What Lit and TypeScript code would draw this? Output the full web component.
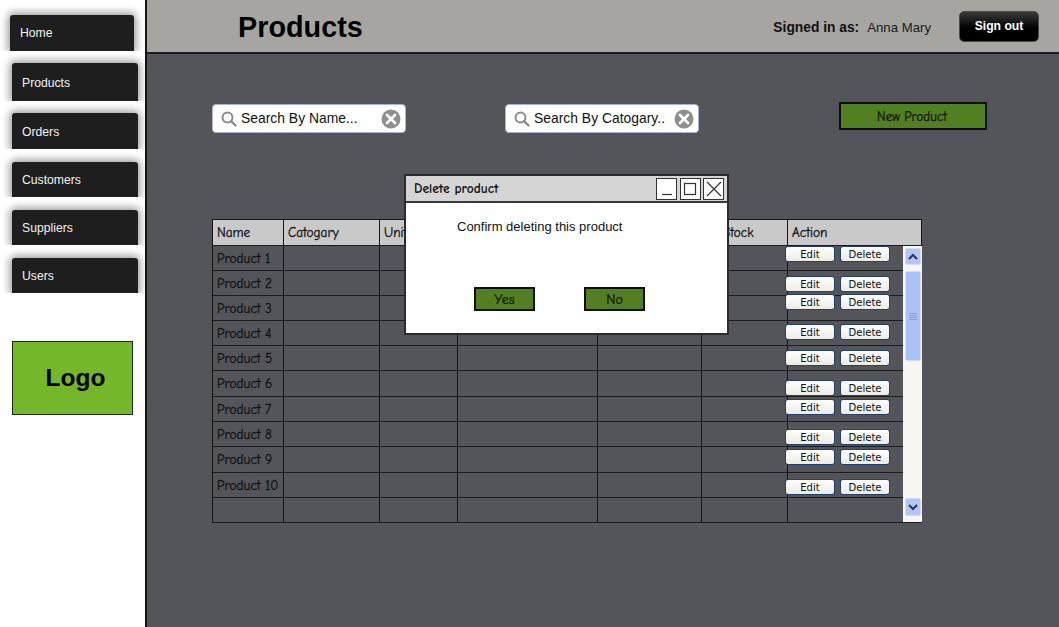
import { LitElement, html, css, svg } from "lit";
import { customElement } from "lit/decorators.js";
import { styleMap } from "lit/directives/style-map.js";

const NAV = [
  { label: "Home", pad: "10px 11px 0 10px", h: 36, mt: 5, pt: 0 },
  { label: "Products", pad: "10px 7px 0 12px", h: 38, mt: 2, pt: 2 },
  { label: "Orders", pad: "10px 7px 0 12px", h: 36, mt: 2, pt: 2 },
  { label: "Customers", pad: "10px 7px 0 12px", h: 35, mt: 3, pt: 0 },
  { label: "Suppliers", pad: "10px 7px 0 12px", h: 35, mt: 3, pt: 0 },
  { label: "Users", pad: "10px 7px 0 12px", h: 35, mt: 3, pt: 0 },
];
const COLS = [71, 96, 78, 140, 104, 86, 134];
const ROW_H = [25, 25, 25, 25, 25, 26, 25, 25, 26, 25, 25];
const BTN_TOP = [27, 57, 75, 105, 131, 161, 180, 210, 230, 260];
const HEAD = ["Name", "Catogary", "Unit", "", "", "In Stock", "Action"];

@customElement("app-root")
export class AppRoot extends LitElement {
  static styles = css`
    :host { display: block; width: 1059px; height: 627px; overflow: hidden; font-family: "Liberation Sans", Arial, sans-serif; background: #fff; }
    * { box-sizing: border-box; }
    .page { display: flex; width: 1059px; height: 627px; position: relative; }
    .side { width: 145px; flex: none; background: #fff; display: flex; flex-direction: column; }
    .navwrap { overflow: hidden; flex: none; }
    .nav { background: #1e1e1e; color: #f2f2f2; font-size: 12.2px; display: flex; align-items: center; padding-left: 10px; border-radius: 3px 3px 0 0; box-shadow: 0 0 9px 2px rgba(0,0,0,.42); }
    .logo { margin: 48px 0 0 12px; width: 121px; height: 74px; background: #74b72b; border: 1px solid #1c2a10; display: flex; align-items: center; justify-content: center; font-weight: 700; font-size: 24.5px; color: #000; padding: 0 0 1px 6px; }
    .main { flex: 1; display: flex; flex-direction: column; border-left: 2px solid #141414; }
    .top { height: 54px; flex: none; background: #a6a5a1; border-bottom: 2px solid #1d1d1d; display: flex; align-items: center; padding-left: 91px; padding-right: 20px; }
    h1 { margin: 2px 0 0; font-size: 28.8px; font-weight: 700; color: #000; flex: 1; line-height: 1; }
    .signed { font-size: 13.8px; font-weight: 700; color: #111; margin: 2px 8px 0 0; }
    .user { font-size: 13.2px; color: #1a1a1a; margin: 2px 28px 0 0; }
    .signout { width: 80px; height: 31px; border-radius: 5px; background: linear-gradient(#3a3a3a, #000 55%); border: 1px solid #4a4a4a; color: #fff; font: 700 12.2px "Liberation Sans", Arial, sans-serif; padding: 0; }
    .content { flex: 1; background: #54555a; padding: 50px 0 0 65px; position: relative; }
    .tools { display: flex; align-items: flex-start; height: 115px; }
    .search { width: 194px; height: 29px; background: #fff; border-radius: 4px; border: 1px solid #a9b4cf; display: flex; align-items: center; padding: 0 4px 0 7px; font-size: 13.9px; color: #111; }
    .search + .search { margin-left: 99px; }
    .search span { flex: 1; margin: 0 0 1px 3px; white-space: nowrap; }
    .grn { background: #517f22; border: 2px solid #0f0f0f; color: #111; font: 13px "Comic Sans MS", "Comic Neue", cursive; -webkit-text-stroke: .25px #111; display: flex; align-items: center; justify-content: center; padding: 0 2px 0 0; }
    .new { width: 148px; height: 28px; margin: -2px 0 0 140px; }
    .tablewrap { position: relative; width: 710px; height: 304px; }
    .table { display: grid; border-top: 1px solid #141414; border-left: 1px solid #141414; }
    .cell { border-right: 1px solid #141414; border-bottom: 1px solid #1c1c1e; font: 13.3px "Comic Sans MS", "Comic Neue", cursive; -webkit-text-stroke: .3px #111; color: #111; display: flex; align-items: center; padding-left: 4px; white-space: nowrap; overflow: hidden; }
    .head { background: #c9c9c9; }
    .btn { position: absolute; height: 16px; width: 50px; background: linear-gradient(#fff, #ecebe4); border: 1px solid #24406a; border-radius: 3px; font: 11.2px "DejaVu Sans", sans-serif; font-stretch: condensed; color: #111; padding: 0; display: flex; align-items: center; justify-content: center; }
    .edit { left: 573px; }
    .del { left: 628px; }
    .scroll { position: absolute; left: 691px; top: 27px; width: 19px; height: 276px; background: #f7f6f2; }
    .sb { position: absolute; left: 2px; width: 16px; background: #b3c6f6; border: 1px solid #d5dcee; border-radius: 2px; display: flex; align-items: center; justify-content: center; }
    .sb.up { top: 2px; height: 17px; }
    .sb.thumb { top: 25px; height: 90px; background: #a9c0f8; }
    .sb.down { top: 252px; height: 18px; }
    .modal { position: absolute; left: 257px; top: 120px; width: 325px; height: 161px; background: #fff; border: 2px solid #2c2c2e; display: flex; flex-direction: column; }
    .mhead { height: 27px; flex: none; background: #d5d5d5; border-bottom: 2px solid #3a3a3c; display: flex; align-items: center; padding: 0 3px 0 8px; gap: 2.5px; }
    .mtitle { flex: 1; font: 700 13.5px "Comic Sans MS", "Comic Neue", cursive; color: #111; }
    .wbtn { width: 21px; height: 22px; background: #fff; border: 1px solid #333; display: flex; align-items: center; justify-content: center; padding: 0; }
    .msg { margin: 14px 0 0 51px; font-size: 13px; color: #111; line-height: 20px; }
    .macts { display: flex; gap: 49px; margin: 50px 0 0 68px; }
    .macts .grn { width: 61px; height: 24px; font-size: 14px; padding: 0; }
  `;

  private searchIcon() {
    return html`<svg width="18" height="18" viewBox="0 0 18 18"><circle cx="7.5" cy="7.5" r="5" fill="none" stroke="#8b8b8b" stroke-width="2"/><path d="M11 11l4.5 4.5" stroke="#8b8b8b" stroke-width="2.4" stroke-linecap="round"/></svg>`;
  }
  private clearIcon() {
    return html`<svg width="20" height="20" viewBox="0 0 20 20"><circle cx="10" cy="10" r="9.5" fill="#8f8f8f"/><path d="M6 6l8 8M14 6l-8 8" stroke="#fff" stroke-width="2.6" stroke-linecap="round"/></svg>`;
  }

  render() {
    const rows = ROW_H.map((_, i) => (i < 10 ? `Product ${i + 1}` : ""));
    return html`
      <div class="page">
        <aside class="side">
          ${NAV.map((n) => html`
            <div class="navwrap" style=${styleMap({ padding: n.pad, marginTop: `${n.mt}px` })}>
              <div class="nav" style=${styleMap({ height: `${n.h}px`, paddingTop: `${n.pt}px` })}>${n.label}</div>
            </div>`)}
          <div class="logo">Logo</div>
        </aside>
        <div class="main">
          <header class="top">
            <h1>Products</h1>
            <span class="signed">Signed in as:</span>
            <span class="user">Anna Mary</span>
            <button class="signout">Sign out</button>
          </header>
          <section class="content">
            <div class="tools">
              <div class="search">${this.searchIcon()}<span>Search By Name...</span>${this.clearIcon()}</div>
              <div class="search">${this.searchIcon()}<span>Search By Catogary..</span>${this.clearIcon()}</div>
              <button class="grn new">New Product</button>
            </div>
            <div class="tablewrap">
              <div class="table" style=${styleMap({ gridTemplateColumns: COLS.map((c) => `${c}px`).join(" "), gridTemplateRows: `26px ${ROW_H.map((h) => `${h}px`).join(" ")}` })}>
                ${HEAD.map((h) => html`<div class="cell head">${h}</div>`)}
                ${rows.map((r) => html`<div class="cell">${r}</div>${COLS.slice(1).map(() => html`<div class="cell"></div>`)}`)}
              </div>
              ${BTN_TOP.map((t) => html`
                <button class="btn edit" style=${styleMap({ top: `${t}px` })}>Edit</button>
                <button class="btn del" style=${styleMap({ top: `${t}px` })}>Delete</button>`)}
              <div class="scroll">
                <div class="sb up"><svg width="10" height="7" viewBox="0 0 10 7"><path d="M1 6l4-4 4 4" fill="none" stroke="#22345e" stroke-width="2"/></svg></div>
                <div class="sb thumb"><svg width="8" height="7" viewBox="0 0 8 7"><path d="M0 .5h8M0 2.5h8M0 4.5h8M0 6.5h8" stroke="#8aa0d4" stroke-width="1"/></svg></div>
                <div class="sb down"><svg width="10" height="7" viewBox="0 0 10 7"><path d="M1 1l4 4 4-4" fill="none" stroke="#22345e" stroke-width="2"/></svg></div>
              </div>
            </div>
            <div class="modal">
              <div class="mhead">
                <span class="mtitle">Delete product</span>
                <button class="wbtn"><svg width="14" height="14" viewBox="0 0 14 14"><path d="M2 12.5h10" stroke="#333" stroke-width="1.2"/></svg></button>
                <button class="wbtn"><svg width="14" height="14" viewBox="0 0 14 14">${svg`<rect x="1.5" y="1.5" width="11" height="11" fill="none" stroke="#333" stroke-width="1.2"/>`}</svg></button>
                <button class="wbtn"><svg width="18" height="18" viewBox="0 0 18 18"><path d="M2 2l14 14M16 2L2 16" stroke="#333" stroke-width="1.2"/></svg></button>
              </div>
              <div class="msg">Confirm deleting this product</div>
              <div class="macts"><button class="grn">Yes</button><button class="grn">No</button></div>
            </div>
          </section>
        </div>
      </div>`;
  }
}
